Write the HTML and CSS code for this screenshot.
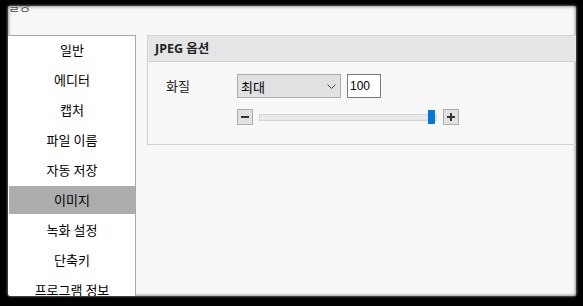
FILE: index.html
```html
<!DOCTYPE html>
<html>
<head>
    <title>설정</title>
    <link rel="stylesheet" href="styles.css">
</head>
<body>

<div class="window">
    <div class="title">설정</div>

    <div class="main">
        <ul class="sidebar">
            <li>일반</li>
            <li>에디터</li>
            <li>캡처</li>
            <li>파일 이름</li>
            <li>자동 저장</li>
            <li class="selected">이미지</li>
            <li>녹화 설정</li>
            <li>단축키</li>
            <li>프로그램 정보</li>
        </ul>

        <div class="content">
            <div class="group">
                <div class="group-head">JPEG 옵션</div>
                <div class="group-body">
                    <div class="label">화질</div>
                    <div class="controls">
                        <div class="row">
                            <div class="combo">
                                <span>최대</span>
                                <svg class="chevron" width="9" height="5" viewBox="0 0 9 5">
                                    <path d="M0.5 0.5 L4.5 4.5 L8.5 0.5" fill="none" stroke="#444" stroke-width="1"/>
                                </svg>
                            </div>
                            <div class="num">100</div>
                        </div>
                        <div class="row slider-row">
                            <div class="step">
                                <svg width="10" height="10" viewBox="0 0 10 10">
                                    <rect x="1" y="4" width="8" height="2" fill="#333"/>
                                </svg>
                            </div>
                            <div class="track">
                                <div class="thumb"></div>
                            </div>
                            <div class="step">
                                <svg width="10" height="10" viewBox="0 0 10 10">
                                    <rect x="1" y="4" width="8" height="2" fill="#333"/>
                                    <rect x="4" y="1" width="2" height="8" fill="#333"/>
                                </svg>
                            </div>
                        </div>
                    </div>
                </div>
            </div>
        </div>
    </div>
</div>

</body>
</html>
```

FILE: styles.css
```css
html, body {
    margin: 0;
    padding: 0;
    background-color: #000;
}

body {
    padding: 6px 7px 10px 8px;
    height: 306px;
    box-sizing: border-box;
    font-family: "Noto Sans", "Noto Sans CJK KR", sans-serif;
}

.window {
    height: 100%;
    background-color: #f7f7f7;
    overflow: hidden;
    border-radius: 3px;
    box-shadow: inset 0 0 3px 1px #9a9a9a, 0 0 2px 1px #555;
}

.title {
    margin-top: -6px;
    height: 35px;
    line-height: 14px;
    font-size: 12px;
    color: #444;
}

.main {
    display: flex;
    height: 300px;
}

.sidebar {
    list-style: none;
    margin: 0;
    padding: 0;
    width: 127px;
    flex-shrink: 0;
    background-color: #fff;
    border-top: 1px solid #a9a9a9;
    border-right: 1px solid #a9a9a9;
    font-family: "Noto Sans CJK KR", sans-serif;
}

.sidebar li {
    height: 28px;
    line-height: 28px;
    margin: 0 0 2px 1px;
    text-align: center;
    font-size: 13px;
    color: #000;
}

.sidebar li.selected {
    background-color: #acacac;
}

.content {
    flex: 1;
    min-width: 0;
    padding-left: 11px;
}

.group {
    width: 460px;
    height: 108px;
    border: 1px solid #d2d2d2;
}

.group-head {
    height: 25px;
    line-height: 25px;
    padding-left: 7px;
    background-color: #e5e5e5;
    border-bottom: 1px solid #d2d2d2;
    font-size: 12.5px;
    font-weight: 700;
    color: #222;
}

.group-body {
    display: flex;
    padding: 12px 0 0 18px;
}

.label {
    width: 71px;
    flex-shrink: 0;
    height: 24px;
    line-height: 24px;
    font-size: 13px;
    color: #222;
    font-family: "Noto Sans CJK KR", sans-serif;
}

.controls {
    display: flex;
    flex-direction: column;
    gap: 11px;
}

.row {
    display: flex;
    gap: 6px;
}

.combo {
    border: 1px solid #adadad;
    background-color: #e1e1e1;
    display: flex;
    align-items: center;
    justify-content: space-between;
    padding: 0 4px 0 3px;
    box-sizing: border-box;
    width: 104px;
    height: 24px;
    font-size: 13px;
    font-family: "Noto Sans CJK KR", sans-serif;
    color: #000;
}

.num {
    width: 34px;
    height: 24px;
    box-sizing: border-box;
    border: 1px solid #7a7a7a;
    background-color: #fff;
    font-family: "Liberation Sans", sans-serif;
    font-size: 12px;
    line-height: 22px;
    padding-left: 2px;
}

.slider-row {
    align-items: center;
}

.step {
    width: 16px;
    height: 16px;
    flex-shrink: 0;
    box-sizing: border-box;
    border: 1px solid #adadad;
    background-color: #e1e1e1;
    display: flex;
    align-items: center;
    justify-content: center;
}

.track {
    position: relative;
    width: 178px;
    height: 7px;
    box-sizing: border-box;
    border: 1px solid #d6d6d6;
    background-color: #e7eaea;
}

.thumb {
    position: absolute;
    right: 1px;
    top: -5px;
    width: 7px;
    height: 14px;
    background-color: #0078d7;
}
```
